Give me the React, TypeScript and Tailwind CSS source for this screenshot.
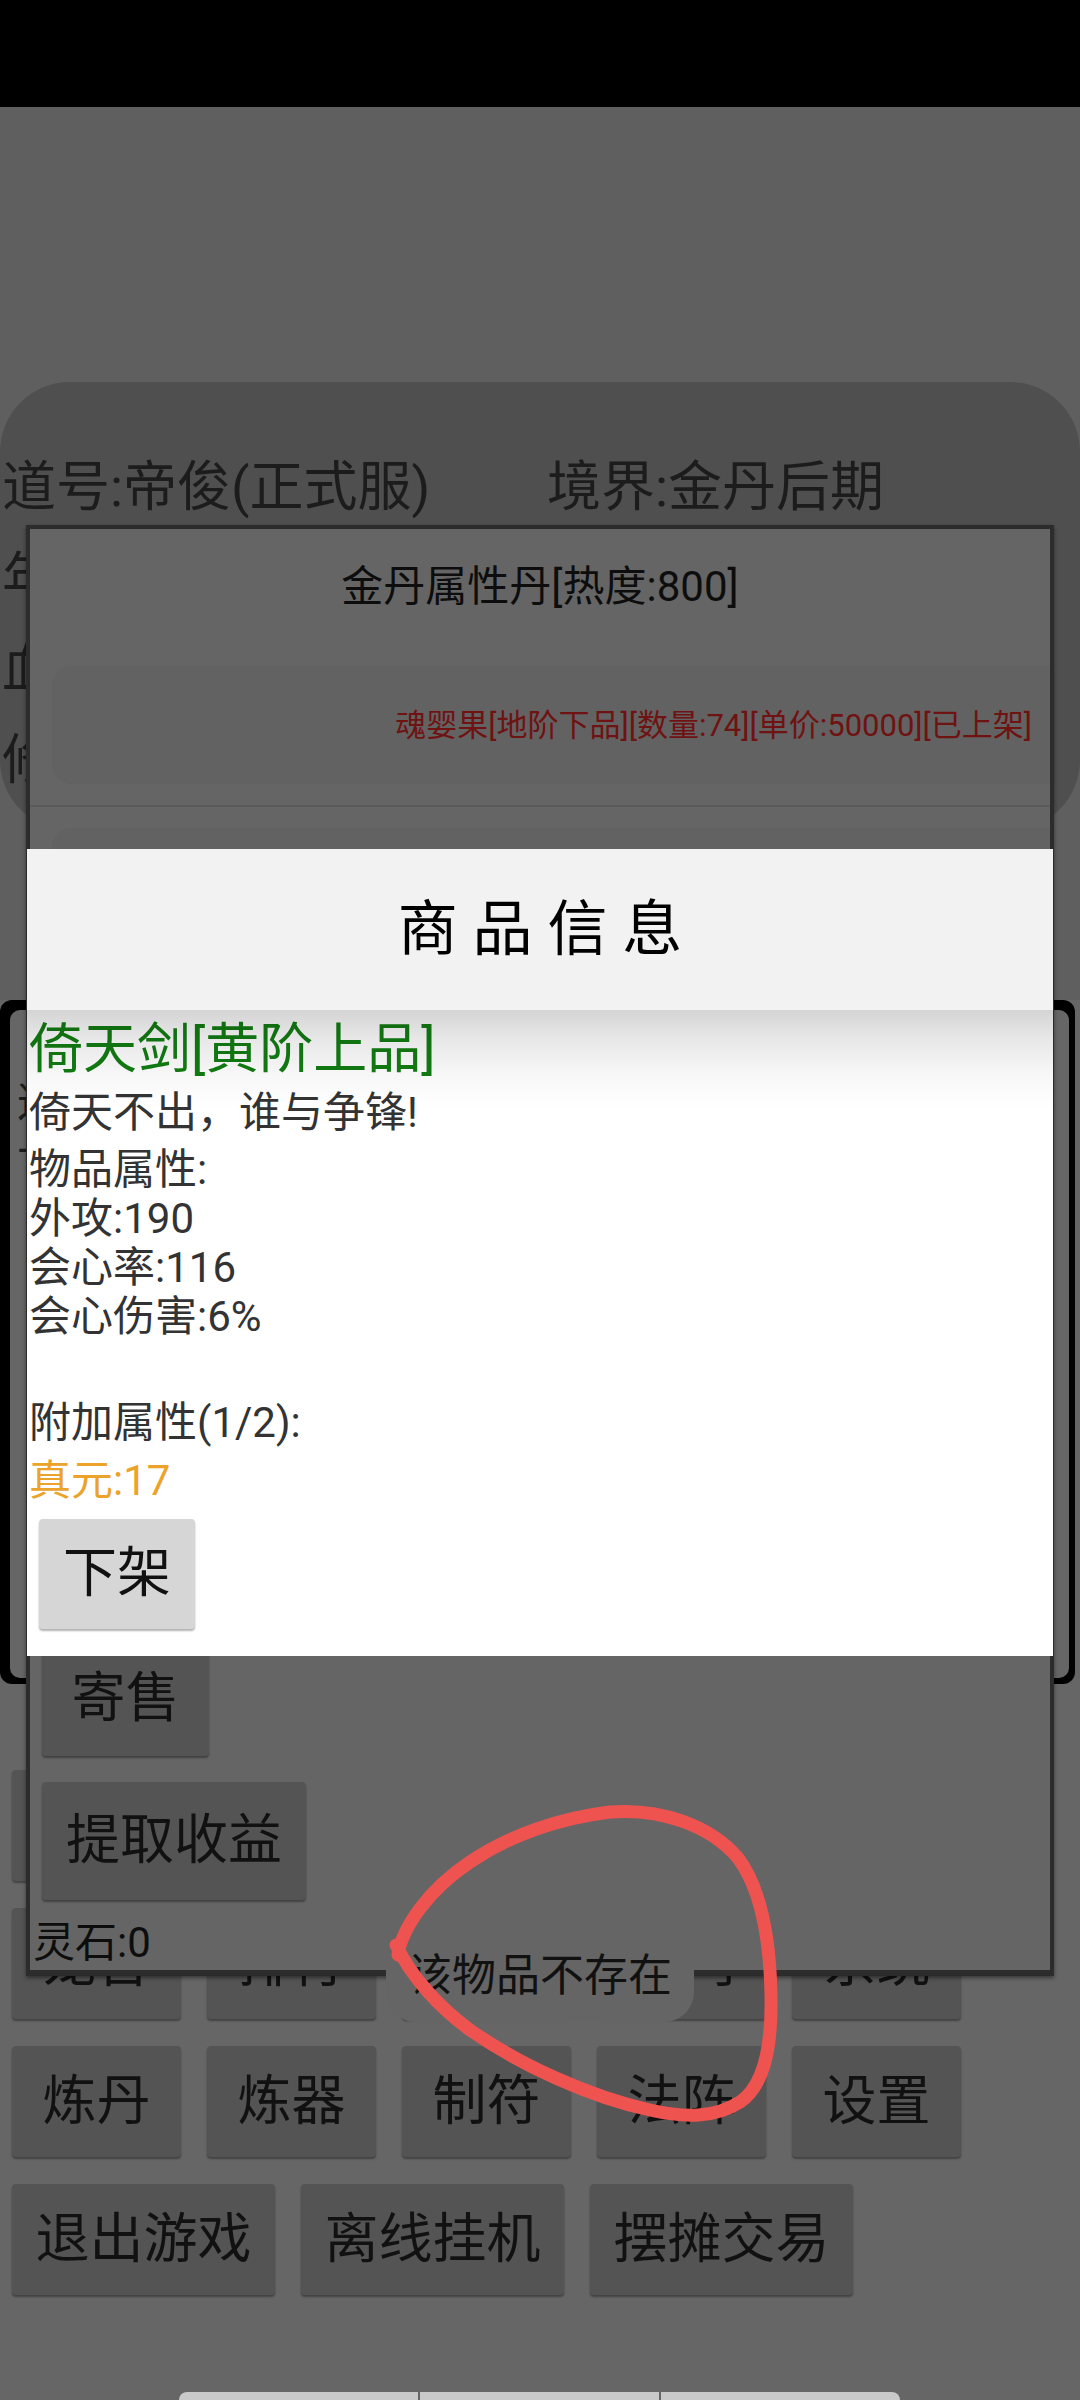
import React from "react";

const BTN =
  "flex items-center justify-center rounded-[4px] bg-[#545454] text-[54px] leading-none text-[#111111] shadow-[0_2px_2px_rgba(0,0,0,0.35)]";

function GridButton({ label, w }: { label: string; w: string }) {
  return <div className={`${BTN} ${w} h-[111px]`}>{label}</div>;
}

export default function App() {
  const row0 = ["", " ", "  ", "   ", "    "];
  const row1 = ["宠舍", "排行", "坊市", "宗门", "系统"];
  const row2 = ["炼丹", "炼器", "制符", "法阵", "设置"];
  const row3 = ["退出游戏", "离线挂机", "摆摊交易"];

  return (
    <div className="relative h-[2400px] w-[1080px] overflow-hidden bg-[#666666] font-['Roboto','Noto_Sans_CJK_SC',sans-serif]">
      {/* status bar */}
      <div className="h-[107px] bg-black" />

      {/* upper area */}
      <div className="bg-[#5f5f5f] pb-[170px] pt-[275px]">
        <div className="h-[448px] rounded-[70px] bg-[#4f4f4f] pt-[60px] text-[54px] leading-[54px] text-[#1c1c1c]">
          <div className="flex h-[91px] items-center">
            <span className="w-[547px] pl-[2px]">道号:帝俊(正式服)</span>
            <span>境界:金丹后期</span>
          </div>
          <div className="flex h-[91px] items-center">
            <span className="pl-[2px]">年龄</span>
          </div>
          <div className="flex h-[91px] items-center">
            <span className="pl-[2px]">血量</span>
          </div>
          <div className="flex h-[91px] items-center">
            <span className="pl-[2px]">修为</span>
          </div>
        </div>
      </div>

      {/* bordered box */}
      <div className="mr-[5px] h-[684px] rounded-[12px] bg-black pb-[6px] pl-[10px] pr-[6px] pt-[10px]">
        <div className="h-full rounded-[10px] bg-[#666666] pl-[7px] text-[42px] leading-[49px] text-[#1c1c1c]">
          <div className="pt-[68px]">这</div>
          <div className="mt-[15px]">下</div>
        </div>
      </div>

      {/* button grid */}
      <div className="mt-[86px] flex flex-col gap-[27px] px-[12px]">
        <div className="flex gap-[26px]">
          {row0.map((l) => (
            <GridButton key={l} label="" w="w-[169px]" />
          ))}
        </div>
        <div className="flex gap-[26px]">
          {row1.map((l) => (
            <GridButton key={l} label={l} w="w-[169px]" />
          ))}
        </div>
        <div className="flex gap-[26px]">
          {row2.map((l) => (
            <GridButton key={l} label={l} w="w-[169px]" />
          ))}
        </div>
        <div className="flex gap-[26px]">
          {row3.map((l) => (
            <GridButton key={l} label={l} w="w-[263px]" />
          ))}
        </div>
      </div>

      {/* bottom segments */}
      <div className="ml-[179px] mt-[97px] flex h-[8px] w-[721px] gap-[2px]">
        <div className="flex-1 rounded-tl-[8px] bg-[#c9c9c9]" />
        <div className="flex-1 bg-[#c9c9c9]" />
        <div className="flex-1 rounded-tr-[8px] bg-[#c9c9c9]" />
      </div>

      {/* dialog A (shop list, dimmed) */}
      <div className="absolute left-[26px] top-[525px] flex h-[1451px] w-[1028px] flex-col border-[4px] border-b-[6px] border-[#2c2c2c] bg-[#656565] shadow-[0_2px_4px_rgba(0,0,0,0.45)]">
        <div className="flex h-[116px] shrink-0 items-center justify-center text-[42px] leading-[42px] text-[#0d0d0d]">
          金丹属性丹[热度:800]
        </div>
        <div className="ml-[22px] mt-[21px] flex h-[118px] shrink-0 items-center justify-end rounded-l-[20px] bg-[#626262] pr-[18px] text-[31px] leading-[31px] text-[#6f1212]">
          魂婴果[地阶下品][数量:74][单价:50000][已上架]
        </div>
        <div className="mt-[21px] h-[2px] shrink-0 bg-[#5a5a5a]" />
        <div className="ml-[22px] mt-[21px] h-[118px] shrink-0 rounded-l-[20px] bg-[#626262]" />
        <div className="flex-1" />
        <div className={`${BTN} mb-[26px] ml-[12px] h-[115px] w-[167px] shrink-0`}>寄售</div>
        <div className={`${BTN} mb-[18px] ml-[12px] h-[118px] w-[264px] shrink-0`}>提取收益</div>
        <div className="mb-[3px] h-[49px] shrink-0 pl-[3px] text-[42px] leading-[49px] text-[#0d0d0d]">灵石:0</div>
      </div>

      {/* dialog B (item info) */}
      <div className="absolute left-[27px] top-[849px] flex h-[807px] w-[1026px] flex-col bg-white">
        <div className="flex h-[161px] shrink-0 items-center justify-center bg-[#f2f2f2] text-[60px] leading-[60px] text-black">
          商 品 信 息
        </div>
        <div className="flex flex-col pl-[2px] text-[42px] leading-[49px] text-[#333333]">
          <div className="mt-[8px] h-[64px] text-[54px] leading-[64px] text-[#127d12]">倚天剑[黄阶上品]</div>
          <div className="mt-[6px] h-[49px]">倚天不出，谁与争锋!</div>
          <div className="mt-[8px] flex flex-col">
            <div className="h-[49px]">物品属性:</div>
            <div className="h-[49px]">外攻:190</div>
            <div className="h-[49px]">会心率:116</div>
            <div className="h-[49px]">会心伤害:6%</div>
            <div className="h-[49px]" />
          </div>
          <div className="mt-[8px] h-[49px]">附加属性(1/2):</div>
          <div className="mt-[9px] h-[49px] text-[#eba32a]">真元:17</div>
          <div className="ml-[10px] mt-[14px] flex h-[110px] w-[156px] items-center justify-center rounded-[4px] bg-[#d6d6d6] text-[54px] leading-none text-[#111111] shadow-[0_2px_2px_rgba(0,0,0,0.3)]">
            下架
          </div>
        </div>
        <div className="pointer-events-none absolute left-0 right-0 top-[161px] h-[100px] bg-[linear-gradient(to_bottom,rgba(0,0,0,0.17),rgba(0,0,0,0.09)_30%,rgba(0,0,0,0.03)_65%,rgba(0,0,0,0))]" />
      </div>

      {/* toast */}
      <div className="absolute left-[386px] top-[1930px] flex h-[92px] w-[308px] items-center justify-center rounded-[30px] bg-[#656565] text-[44px] leading-[44px] text-[#111111]">
        该物品不存在
      </div>

      {/* hand-drawn annotation */}
      <svg
        className="pointer-events-none absolute left-0 top-0 h-[2400px] w-[1080px]"
        viewBox="0 0 1080 2400"
        fill="none"
      >
        <path
          d="M 398 1955 C 402 1928, 428 1890, 470 1862 C 510 1835, 560 1818, 610 1812 C 660 1808, 710 1825, 738 1858 C 762 1890, 770 1940, 771 1995 C 772 2045, 765 2085, 740 2102 C 715 2118, 685 2118, 650 2110 C 590 2097, 520 2065, 470 2030 C 440 2008, 412 1978, 396 1945"
          stroke="#ef5350"
          strokeWidth="13"
          strokeLinecap="round"
          strokeLinejoin="round"
        />
      </svg>
    </div>
  );
}
